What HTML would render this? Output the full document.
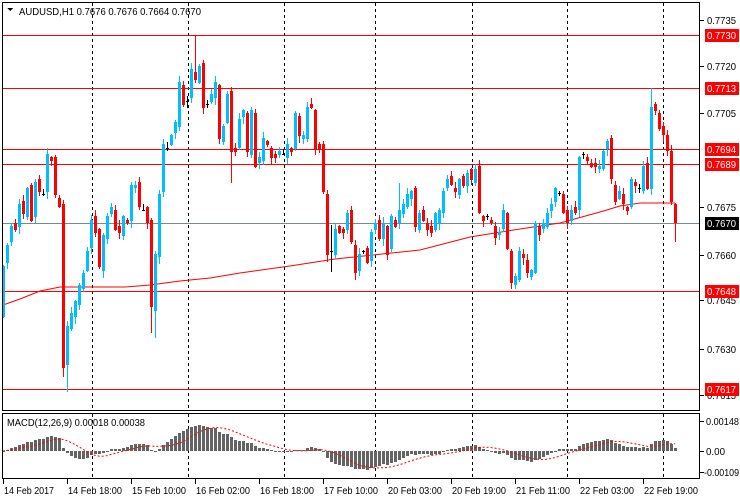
<!DOCTYPE html>
<html><head><meta charset="utf-8"><style>
html,body{margin:0;padding:0;background:#fff;}
svg{display:block;font-family:"Liberation Sans",Tahoma,sans-serif;font-size:10.5px;}
</style></head><body>
<svg id="s" width="740" height="500" viewBox="0 0 740 500" shape-rendering="crispEdges">
<rect width="740" height="500" fill="#fff"/>
<g id="grid"></g>
<g id="hl"></g>
<g id="ma"></g>
<g id="candles"></g>
<g id="macd"></g>
<g id="axis"></g>
<rect x="2.5" y="2.5" width="697" height="408" fill="none" stroke="#000"/>
<rect x="2.5" y="413.5" width="697" height="65" fill="none" stroke="#000"/>
<polygon points="7,8 13,8 10,11" fill="#000"/>
<text x="19" y="15" fill="#000" textLength="182" lengthAdjust="spacingAndGlyphs">AUDUSD,H1  0.7676 0.7676 0.7664 0.7670</text>
<text x="7" y="426" fill="#000" textLength="138" lengthAdjust="spacingAndGlyphs">MACD(12,26,9) 0.00018 0.00038</text>
</svg>
<script>
var NS="http://www.w3.org/2000/svg";
function el(p,t,a,txt){var e=document.createElementNS(NS,t);for(var k in a)e.setAttribute(k,a[k]);if(txt!=null)e.textContent=txt;document.getElementById(p).appendChild(e);return e;}
[92,188,284,375,472,567,663].forEach(function(x){
 el('grid','line',{x1:x+.5,y1:3,x2:x+.5,y2:410,stroke:'#000','stroke-dasharray':'3,3'});
 el('grid','line',{x1:x+.5,y1:414,x2:x+.5,y2:478,stroke:'#000','stroke-dasharray':'3,3'});
});
[35,88,149,164,291,389].forEach(function(y){el('hl','line',{x1:3,y1:y+.5,x2:699,y2:y+.5,stroke:'#f00'});});
el('hl','line',{x1:3,y1:223.5,x2:699,y2:223.5,stroke:'#778899'});
el('ma','polyline',{points:"3,305 20,299 40,291 60,287 80,287 125,287 150,285 180,281 210,278 240,273 290,266 335,259 373,255 420,250 470,237 520,229 560,223 600,212 620,206 640,203 675,203",fill:'none',stroke:'#f00','shape-rendering':'auto'});
var C=[[317,266],[263,245],[242,226],[223,230],[227,204],[201,214],[217,188],[185,221],[217,182],[179,192],[194,194],[192,154],[157,161],[157,195],[198,207],[204,368],[365,326],[329,313],[317,301],[305,285],[289,273],[271,251],[248,220],[216,233],[229,267],[271,235],[239,216],[214,207],[210,230],[226,233],[236,216],[220,223],[221,185],[188,185],[182,207],[210,210],[207,223],[220,307],[311,254],[257,194],[192,144],[148,148],[145,135],[133,122],[127,82],[85,105],[101,101],[98,69],[72,80],[83,66],[63,108],[104,104],[102,94],[98,82],[85,139],[142,126],[123,94],[91,152],[148,152],[148,119],
[117,110],[113,152],[155,110],[113,167],[163,157],[161,138],[141,145],[148,158],[154,158],[155,151],[154,154],[158,144],[148,152],[149,113],[116,136],[139,135],[139,107],[104,108],[110,149],[144,149],[144,192],[194,255],[251,251],[255,229],[226,233],[229,233],[230,213],[210,242],[245,273],[271,254],[251,251],[248,263],[261,232],[230,223],[220,239],[239,223],[226,255],[249,216],[220,227],[223,210],[214,204],[207,194],[199,191],[188,227],[230,213],[210,221],[223,230],[226,233],[230,213],[223,210],[213,191],[188,179],[176,185],[188,192],[195,179],[176,186],[186,173],
[169,180],[183,169],[166,213],[216,221],[216,216],[220,223],[226,238],[235,232],[229,210],[213,249],[251,283],[285,276],[280,251],[254,258],[260,273],[277,270],[273,223],[226,235],[229,223],[227,213],[211,204],[202,188],[193,193],[194,213],[210,223],[221,210],[207,213],[210,157],[154,154],[157,161],[163,167],[163,167],[169,166],[169,151],[149,141],[138,179],[185,202],[199,191],[194,204],[207,211],[207,179],[182,186],[188,188],[191,166],[163,189],[189,107],[104,111],[113,129],[126,135],[135,151],[151,202],[204,223]];
var HI={15:200,44:76,48:35,37:218,117:168,162:88,82:225,99:183},LO={15:377,16:392,37:333,38:338,168:242,82:272,57:183};
C.forEach(function(c,i){
 var x=3+4*i,o=c[0],cl=c[1],t=Math.min(o,cl),b=Math.max(o,cl);
 var w1=(i*7)%6+1,w2=(i*5)%7+1;
 var hi=HI[i]!=null?HI[i]:t-w1, lo=LO[i]!=null?LO[i]:b+w2;
 var col=cl<o?'#00bfff':(cl>o?'#f00':'#000');
 el('candles','rect',{x:x,y:hi,width:1,height:lo-hi,fill:col});
 if(o==cl){el('candles','rect',{x:x-1,y:t,width:3,height:1,fill:col});}
 else el('candles','rect',{x:x-1,y:t,width:3,height:Math.max(1,b-t),fill:col});
});
var P=C.map(function(c){return -c[1];});
function ema(n){var k=2/(n+1),r=[],e=P[0];for(var i=0;i<P.length;i++){e=i?P[i]*k+e*(1-k):P[i];r.push(e);}return r;}
var e12=ema(12),e26=ema(26),M=e12.map(function(v,i){return v-e26[i];});
var S=M.map(function(v,i){var s=0,n=0;for(var j=Math.max(0,i-8);j<=i;j++){s+=M[j];n++;}return s/n;});
var Z=451,K=0.62;
M.forEach(function(v,i){var x=3+4*i,h=v*K;var y=h>0?Z-h:Z;el('macd','rect',{x:x-1,y:Math.round(y),width:3,height:Math.max(1,Math.round(Math.abs(h))),fill:'#646464'});});
var pts=S.map(function(v,i){return (3+4*i)+','+(Z-v*K).toFixed(1);}).join(' ');
el('macd','polyline',{points:pts,fill:'none',stroke:'#f00','stroke-dasharray':'2,2','shape-rendering':'auto'});
[[20,'0.7735'],[66,'0.7720'],[113,'0.7705'],[207,'0.7675'],[255,'0.7660'],[300,'0.7645'],[349,'0.7630'],[395,'0.7615']].forEach(function(a){
 el('axis','line',{x1:700,y1:a[0]+.5,x2:704,y2:a[0]+.5,stroke:'#000'});
 el('axis','text',{x:707,y:a[0]+4,fill:'#000',textLength:29,lengthAdjust:'spacingAndGlyphs'},a[1]);
});
[[35,'0.7730','#f00'],[88,'0.7713','#f00'],[149,'0.7694','#f00'],[164,'0.7689','#f00'],[223,'0.7670','#000'],[291,'0.7648','#f00'],[389,'0.7617','#f00']].forEach(function(a){
 el('axis','rect',{x:705,y:a[0]-6,width:34,height:13,fill:a[2]});
 el('axis','text',{x:707,y:a[0]+4,fill:'#fff',textLength:29,lengthAdjust:'spacingAndGlyphs'},a[1]);
});
[[421,'0.00148',33,706],[451,'0.00',19,706],[472,'-0.00109',35,704]].forEach(function(a){
 el('axis','line',{x1:700,y1:a[0]+.5,x2:704,y2:a[0]+.5,stroke:'#000'});
 el('axis','text',{x:a[3],y:a[0]+4,fill:'#000',textLength:a[2],lengthAdjust:'spacingAndGlyphs'},a[1]);
});
[[3,'14 Feb 2017',50],[67,'14 Feb 18:00',54],[131,'15 Feb 10:00',54],[195,'16 Feb 02:00',54],[259,'16 Feb 18:00',54],[323,'17 Feb 10:00',54],[387,'20 Feb 03:00',54],[451,'20 Feb 19:00',54],[515,'21 Feb 11:00',54],[579,'22 Feb 03:00',54],[643,'22 Feb 19:00',54]].forEach(function(a){
 el('axis','line',{x1:a[0]+.5,y1:479,x2:a[0]+.5,y2:484,stroke:'#000'});
 el('axis','text',{x:a[0]+1,y:494,fill:'#000',textLength:a[2],lengthAdjust:'spacingAndGlyphs'},a[1]);
});
</script>
</body></html>
